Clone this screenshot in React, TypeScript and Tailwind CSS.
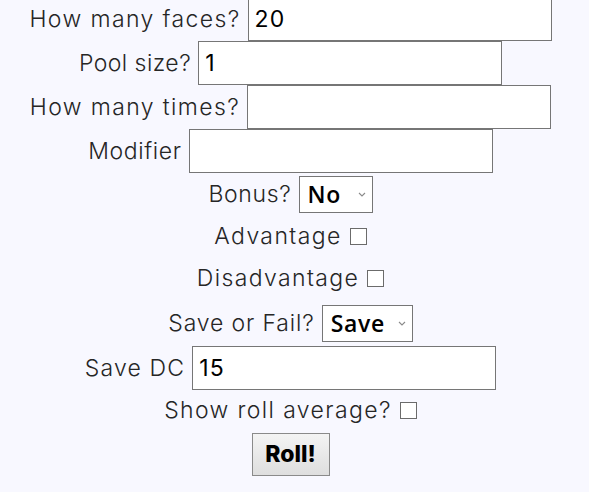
import { useState } from 'react';

const font = { fontFamily: 'Inter, "Noto Sans", sans-serif' };

function Label({ children, tracking = 'tracking-[0.06em]' }: { children: React.ReactNode; tracking?: string }) {
  return <span className={`text-[23px] font-light ${tracking} text-[#262626]`}>{children}</span>;
}

function TextRow({ label, value, tracking }: { label: string; value?: string; tracking?: string }) {
  return (
    <div className="flex h-[44px] items-center gap-[7px]">
      <Label tracking={tracking}>{label}</Label>
      <input
        type="text"
        defaultValue={value}
        className="h-[44px] w-[304px] border border-[#767676] bg-white px-[6px] text-[23px] tracking-[0.05em] text-black outline-none"
      />
    </div>
  );
}

function SelectRow({
  label,
  options,
  width,
  className,
  tracking,
}: {
  label: string;
  options: string[];
  width: string;
  className: string;
  tracking?: string;
}) {
  return (
    <div className={`flex items-center gap-[7px] ${className}`}>
      <Label tracking={tracking}>{label}</Label>
      <div className="relative">
        <select
          style={{ fontFamily: '"Open Sans", "Noto Sans", sans-serif' }}
          className={`h-[37px] ${width} appearance-none rounded-none border border-[#767676] bg-white pl-[8px] text-[23px] font-semibold tracking-[0.03em] text-black outline-none`}
        >
          {options.map((o) => (
            <option key={o}>{o}</option>
          ))}
        </select>
        {/* chevron */}
        <svg
          className="pointer-events-none absolute right-[7px] top-[16px] h-[5px] w-[8px]"
          viewBox="0 0 8 5"
          fill="none"
          stroke="#8a8a8a"
          strokeWidth="1.1"
        >
          <path d="M1 1l3 3 3-3" />
        </svg>
      </div>
    </div>
  );
}

function CheckRow({ label, className }: { label: string; className: string }) {
  const [on, setOn] = useState(false);
  return (
    <div className={`flex items-center gap-[8px] ${className}`}>
      <Label>{label}</Label>
      <input
        type="checkbox"
        checked={on}
        onChange={() => setOn(!on)}
        className="h-[17px] w-[17px] appearance-none border border-[#6b6b6b] bg-white checked:bg-[#0a66d8]"
      />
    </div>
  );
}

export default function App() {
  return (
    <div className="min-h-screen bg-[#f8f8ff]" style={font}>
      <div className="-mt-[3px] flex flex-col items-center pr-[8px]">
        <TextRow label="How many faces?" value="20" />
        <TextRow label="Pool size?" value="1" tracking="tracking-[0.02em]" />
        <TextRow label="How many times?" />
        <TextRow label="Modifier" tracking="tracking-[0.027em]" />
        <SelectRow
          label="Bonus?"
          options={['No', 'Yes']}
          width="w-[74px]"
          className="h-[43px]"
          tracking="tracking-[0.03em]"
        />
        <CheckRow label="Advantage" className="h-[41px]" />
        <CheckRow label="Disadvantage" className="h-[43px]" />
        <SelectRow
          label="Save or Fail?"
          options={['Save', 'Fail']}
          width="w-[91px]"
          className="h-[46px]"
          tracking="tracking-[0.037em]"
        />
        <TextRow label="Save DC" value="15" tracking="tracking-[0.05em]" />
        <CheckRow label="Show roll average?" className="h-[41px]" />
        <button
          type="button"
          className="mt-[2px] h-[43px] w-[78px] border border-[#8a8a8a] bg-gradient-to-b from-[#f4f4f4] to-[#dedede] text-[23px] font-extrabold text-black"
        >
          Roll!
        </button>
      </div>
    </div>
  );
}
